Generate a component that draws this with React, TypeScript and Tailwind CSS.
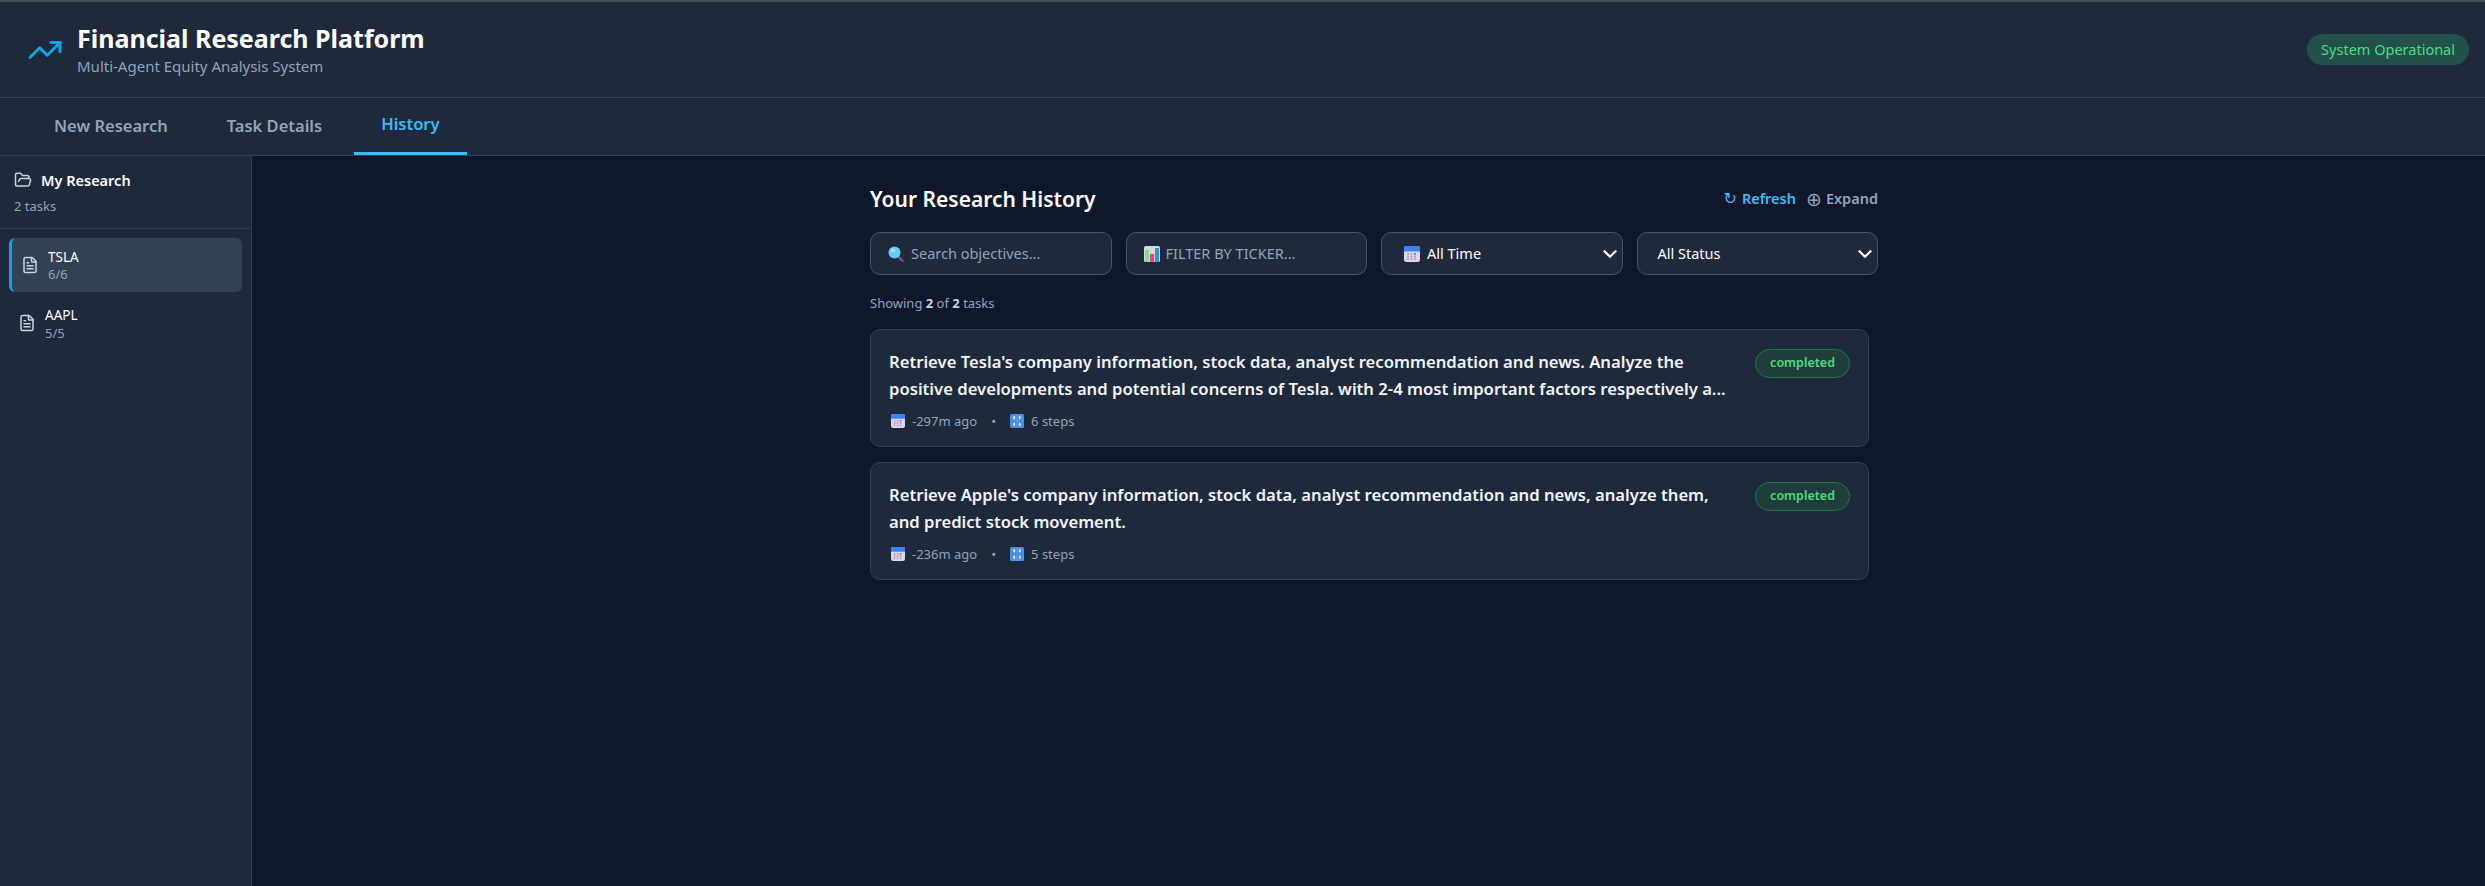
import { ChevronDown, FileText, FolderOpen, TrendingUp } from "lucide-react";

function SearchEmoji() {
  return (
    <svg width="16" height="16" viewBox="0 0 16 16" className="shrink-0">
      <path d="M9.5 10l5 4.6" stroke="#7c4a8c" strokeWidth="2.6" strokeLinecap="round" />
      <circle cx="6.5" cy="6.5" r="6" fill="#5fd0ef" />
      <circle cx="5" cy="4.6" r="2" fill="#a5e6f7" />
    </svg>
  );
}

function ChartEmoji() {
  return (
    <svg width="16" height="16" viewBox="0 0 16 16" className="shrink-0">
      <rect width="16" height="16" rx="1.5" fill="#d9d6e0" />
      <rect x="1" y="4" width="4" height="12" fill="#7fe08a" />
      <rect x="6" y="8" width="4" height="8" fill="#e83e8c" />
      <rect x="11" y="2" width="4" height="14" fill="#2f8fe0" />
    </svg>
  );
}

function CalendarEmoji({ size = 16 }: { size?: number }) {
  return (
    <svg width={size} height={size} viewBox="0 0 16 16" className="shrink-0">
      <rect width="16" height="16" rx="2.5" fill="#e2d6ee" />
      <path d="M0 5.5V2.5A2.5 2.5 0 0 1 2.5 0h11A2.5 2.5 0 0 1 16 2.5v3z" fill="#3b82f6" />
      {[3, 6.5, 10].map((x) =>
        [7, 9.6, 12.2].map((y) => (
          <rect key={`${x}-${y}`} x={x} y={y} width="2" height="1.7" fill={x === 10 && y === 7 ? "#3b82f6" : "#a79cc0"} />
        ))
      )}
    </svg>
  );
}

function NumbersEmoji() {
  return (
    <svg width="14" height="14" viewBox="0 0 14 14" className="shrink-0">
      <rect width="14" height="14" rx="1.5" fill="#4a8fe8" />
      <path d="M7 0v14" stroke="#6ea6ee" strokeWidth="0.5" />
      {[3.4, 9].map((x) =>
        [2.2, 8.8].map((y) => <rect key={`${x}-${y}`} x={x} y={y} width="1.6" height="3" fill="#eaf2fd" />)
      )}
    </svg>
  );
}

function FilterBox({ children }: { children: React.ReactNode }) {
  return (
    <div className="h-[43px] flex items-center gap-[7px] pl-[17px] pr-[1px] bg-[#1e293b] border border-[#475569] rounded-[10px] text-[14.5px]">
      {children}
    </div>
  );
}

const TASKS = [
  {
    title:
      "Retrieve Tesla's company information, stock data, analyst recommendation and news. Analyze the positive developments and potential concerns of Tesla. with 2-4 most important factors respectively a...",
    age: "-297m ago",
    steps: "6 steps",
  },
  {
    title:
      "Retrieve Apple's company information, stock data, analyst recommendation and news, analyze them, and predict stock movement.",
    age: "-236m ago",
    steps: "5 steps",
  },
];

export default function App() {
  return (
    <div className="h-screen flex flex-col bg-[#0f172a] text-white font-['Noto_Sans','Open_Sans',sans-serif] overflow-hidden">
      <div className="h-[2px] bg-[#454a55] shrink-0" />

      {/* header */}
      <header className="h-[96px] shrink-0 bg-[#1e293b] border-b border-[#334155] flex items-center justify-between pl-[27px] pr-[16px]">
        <div className="flex items-center gap-[14px]">
          <TrendingUp size={36} strokeWidth={2} className="text-[#0ea5e9]" />
          <div>
            <h1 className="text-[25px] leading-[32px] font-bold -mt-[1px]">Financial Research Platform</h1>
            <p className="text-[15px] leading-[20px] mt-[2px] text-[#94a3b8]">Multi-Agent Equity Analysis System</p>
          </div>
        </div>
        <span className="h-[31px] flex items-center px-[14px] rounded-full bg-[#22504a] text-[#4ade80] text-[14.5px]">
          System Operational
        </span>
      </header>

      {/* tabs */}
      <nav className="h-[58px] shrink-0 bg-[#1e293b] border-b border-[#334155] flex gap-[5px] pl-[27px]">
        <button className="px-[27px] h-full text-[16.5px] font-semibold text-[#94a3b8]">New Research</button>
        <button className="px-[27px] h-full text-[16.5px] font-semibold text-[#94a3b8]">Task Details</button>
        <button className="px-[27px] h-full pb-[1px] text-[16.5px] font-semibold text-[#38bdf8] border-b-[3px] border-[#38bdf8]">
          History
        </button>
      </nav>

      <div className="flex-1 flex min-h-0">
        {/* sidebar */}
        <aside className="w-[252px] shrink-0 bg-[#1e293b] border-r border-[#334155]">
          <div className="h-[73px] border-b border-[#334155] pl-[14px] pt-[14px]">
            <div className="flex items-center gap-[9px]">
              <FolderOpen size={18} className="text-[#cbd5e1]" />
              <span className="text-[14.5px] leading-[20px] font-semibold">My Research</span>
            </div>
            <p className="text-[13px] leading-[18px] mt-[7px] text-[#94a3b8]">2 tasks</p>
          </div>
          <div className="px-[9px] pt-[9px] flex flex-col gap-[4px]">
            <div className="h-[54px] flex items-center gap-[9px] pl-[9px] bg-[#334155] border-l-[3px] border-[#0ea5e9] rounded-[6px]">
              <FileText size={18} className="text-[#cbd5e1]" />
              <div>
                <p className="text-[13.5px] leading-[18px] mt-[1px]">TSLA</p>
                <p className="text-[13px] leading-[17px] text-[#94a3b8]">6/6</p>
              </div>
            </div>
            <div className="h-[54px] flex items-center gap-[9px] pl-[9px] rounded-[6px]">
              <FileText size={18} className="text-[#cbd5e1]" />
              <div className="pt-[2px]">
                <p className="text-[13.5px] leading-[18px]">AAPL</p>
                <p className="text-[13px] leading-[18px] text-[#94a3b8]">5/5</p>
              </div>
            </div>
          </div>
        </aside>

        {/* history */}
        <main className="flex-1 pl-[618px] pt-[27px]">
          <div className="w-[1008px]">
            <div className="h-[32px] flex items-center justify-between">
              <h2 className="text-[21px] font-semibold pt-[1px]">Your Research History</h2>
              <div className="flex items-center gap-[10px] text-[14.5px] font-semibold">
                <span className="flex items-center gap-[5px] text-[#38bdf8]">
                  <span className="font-['DejaVu_Sans',sans-serif] text-[16px] font-normal leading-none">↻</span>
                  Refresh
                </span>
                <span className="flex items-center gap-[4px] text-[#94a3b8]">
                  <span className="font-['DejaVu_Sans',sans-serif] text-[19px] font-normal leading-none">⊕</span>
                  Expand
                </span>
              </div>
            </div>

            <div className="grid grid-cols-4 gap-[14px] mt-[17px]">
              <FilterBox>
                <SearchEmoji />
                <span className="text-[#94a3b8]">Search objectives...</span>
              </FilterBox>
              <FilterBox>
                <ChartEmoji />
                <span className="text-[#94a3b8] -ml-[1px]">FILTER BY TICKER...</span>
              </FilterBox>
              <FilterBox>
                <span className="ml-[5px]">
                  <CalendarEmoji />
                </span>
                <span className="flex-1">All Time</span>
                <ChevronDown size={22} strokeWidth={2.5} />
              </FilterBox>
              <FilterBox>
                <span className="flex-1 ml-[3px]">All Status</span>
                <ChevronDown size={22} strokeWidth={2.5} />
              </FilterBox>
            </div>

            <p className="mt-[18px] text-[13px] leading-[20px] text-[#94a3b8]">
              Showing <b className="text-[#cbd5e1]">2</b> of <b className="text-[#cbd5e1]">2</b> tasks
            </p>

            <div className="w-[999px] mt-[16px] flex flex-col gap-[15px]">
              {TASKS.map((task) => (
                <div
                  key={task.age}
                  className="h-[118px] flex items-start gap-[20px] bg-[#1e293b] border border-[#334155] rounded-[10px] pl-[18px] pr-[18px] pt-[18px]"
                >
                  <div className="flex-1 min-w-0">
                    <p className="text-[16.65px] leading-[27px] font-semibold text-[#f1f5f9]">{task.title}</p>
                    <div className="flex items-center mt-[9px] text-[13px] leading-[20px] text-[#94a3b8]">
                      <span className="ml-[2px]">
                        <CalendarEmoji size={14} />
                      </span>
                      <span className="ml-[7px]">{task.age}</span>
                      <span className="mx-[14px]">•</span>
                      <NumbersEmoji />
                      <span className="ml-[7px]">{task.steps}</span>
                    </div>
                  </div>
                  <span className="h-[29px] mt-[1px] flex items-center px-[14px] rounded-full bg-[#1f3d3a] border border-[#1a7a3f] text-[#4ade80] text-[12.5px] font-semibold">
                    completed
                  </span>
                </div>
              ))}
            </div>
          </div>
        </main>
      </div>
    </div>
  );
}
